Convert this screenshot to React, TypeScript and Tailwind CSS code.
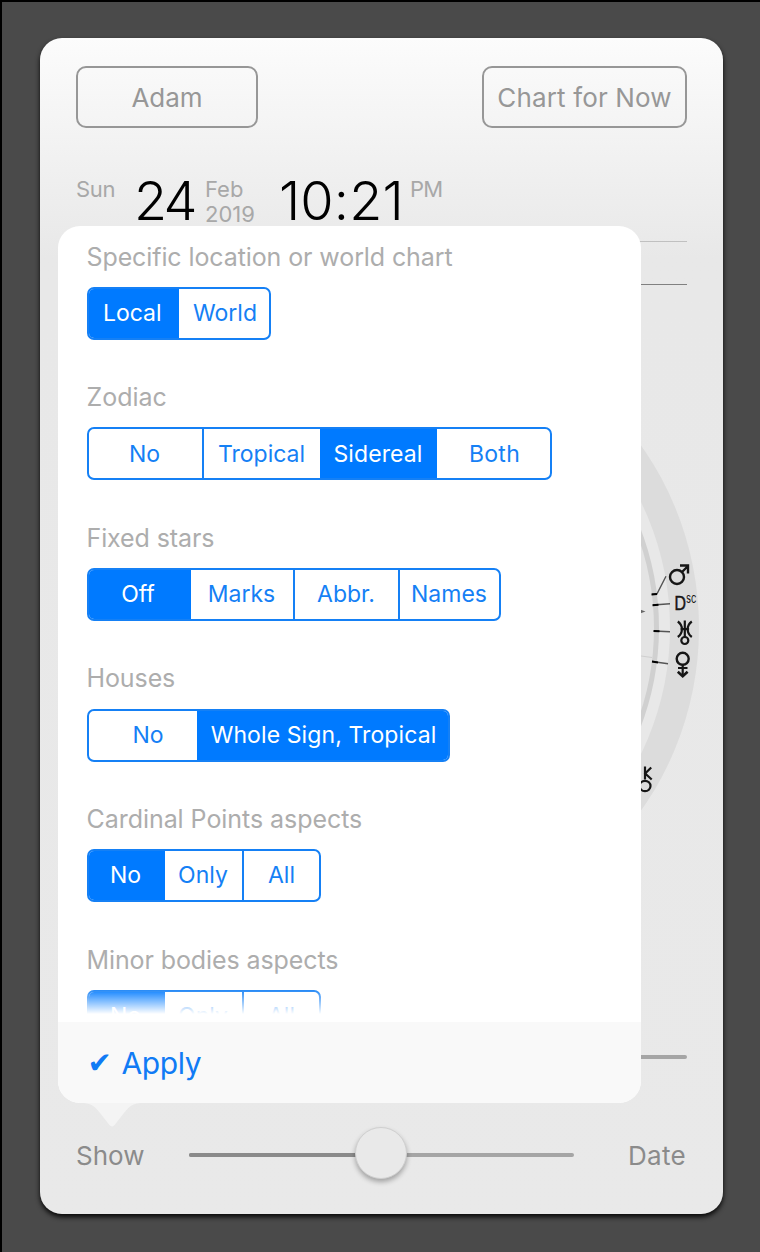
type Option = { text: string; width: string; tracking?: string };
type Group = { title: string; tracking: string; active: number; options: Option[] };

const groups: Group[] = [
  {
    title: "Specific location or world chart",
    tracking: "tracking-[-0.1px]",
    active: 0,
    options: [
      { text: "Local", width: "w-[90.5px] pr-[3px]" },
      { text: "World", width: "w-[90px] pl-[2px]" },
    ],
  },
  {
    title: "Zodiac",
    tracking: "tracking-[0px]",
    active: 2,
    options: [
      { text: "No", width: "w-[113px] pr-px" },
      { text: "Tropical", width: "w-[118px]" },
      { text: "Sidereal", width: "w-[117px]", tracking: "tracking-[0.1px]" },
      { text: "Both", width: "w-[113px] pl-[3px]", tracking: "tracking-[0.3px]" },
    ],
  },
  {
    title: "Fixed stars",
    tracking: "tracking-[-0.1px]",
    active: 0,
    options: [
      { text: "Off", width: "w-[102px] pr-[3px]" },
      { text: "Marks", width: "w-[102px]" },
      { text: "Abbr.", width: "w-[105px]" },
      { text: "Names", width: "w-[101px]" },
    ],
  },
  {
    title: "Houses",
    tracking: "tracking-[-0.1px]",
    active: 1,
    options: [
      { text: "No", width: "w-[108px] pl-[11px]" },
      { text: "Whole Sign, Tropical", width: "w-[251px] pl-[3px]", tracking: "tracking-[0.1px]" },
    ],
  },
  {
    title: "Cardinal Points aspects",
    tracking: "tracking-[-0.05px]",
    active: 0,
    options: [
      { text: "No", width: "w-[76px] pr-[2px]" },
      { text: "Only", width: "w-[77px]" },
      { text: "All", width: "w-[77px] pl-px" },
    ],
  },
  {
    title: "Minor bodies aspects",
    tracking: "tracking-[-0.1px]",
    active: 0,
    options: [
      { text: "No", width: "w-[76px] pr-[2px]" },
      { text: "Only", width: "w-[77px]" },
      { text: "All", width: "w-[77px] pl-px" },
    ],
  },
];

function Segmented({ group }: { group: Group }) {
  return (
    <div className="flex h-[53px] w-fit overflow-hidden rounded-[7px] border-2 border-[#1580f5] bg-white">
      {group.options.map((o, i) => {
        const on = i === group.active;
        const divider = i > 0 && !on && i - 1 !== group.active;
        return (
          <button
            key={o.text}
            className={`flex h-full shrink-0 items-center justify-center whitespace-nowrap text-[23px] ${o.width} ${o.tracking ?? ""} ${
              on ? "bg-[#007aff] text-white" : "text-[#1580f5]"
            } ${divider ? "border-l-2 border-[#1580f5]" : ""}`}
          >
            {o.text}
          </button>
        );
      })}
    </div>
  );
}

function ChartWheel() {
  return (
    <svg className="block" width="683" height="700" viewBox="40 285 683 700" fill="none">
      <circle cx="382" cy="628" r="317" fill="#dcdcdc" />
      <circle cx="382" cy="628" r="288" fill="#e8e8e8" />
      <circle cx="382" cy="628" r="274.5" fill="#e4e4e4" stroke="#d0d0d0" strokeWidth="5" />
      <path d="M641 656l11 1.500" stroke="#cfcfcf" />
      <path d="M640 609.500l5.500 2-5.500 2z" fill="#666" />
      <g stroke="#555" strokeWidth="1.400">
        <path d="M652 594.300l5-.5 9-17.500M653 605l17-1.200M654 631l16 .8M652 661.500l16 2.200" />
      </g>
      <g stroke="#000" strokeWidth="2">
        <path d="M651.500 594.500l5.500-.6M652.500 605.200l6-.5M653.500 631l6 .3M652 661.600l6 .8" />
      </g>
      <g stroke="#161616" strokeWidth="2.400">
        <circle cx="677" cy="577" r="7" />
        <path d="M682 572l6-6M680 565.500h8v8" />
        <path d="M677.800 621.500c5.500 4 5.500 11.500 0 15.500M691.800 621.500c-5.500 4-5.500 11.500 0 15.500M680.500 629.200h8.600M684.800 620.500v16.500" strokeWidth="2.200" />
        <circle cx="684.800" cy="640.500" r="3.500" strokeWidth="2.200" />
        <circle cx="682.700" cy="658.800" r="6" />
        <path d="M682.700 665v11M678 668h9.500" strokeWidth="2.200" />
        <path d="M677.800 671.700l4.900 4.500 4.900-4.500" strokeWidth="2.600" />
        <path d="M645 766.500v13M651.200 767.500l-6 6 6.500 6" strokeWidth="2.200" />
        <ellipse cx="645" cy="786" rx="5.500" ry="5.200" strokeWidth="2.200" />
      </g>
      <text x="674.200" y="609.500" fill="#161616" stroke="#161616" strokeWidth="0.400" fontSize="18.500" textLength="12" lengthAdjust="spacingAndGlyphs">D</text>
      <text x="686" y="603" fill="#161616" fontSize="13" textLength="10.500" lengthAdjust="spacingAndGlyphs">sc</text>
    </svg>
  );
}

function Popover() {
  return (
    <div className="absolute left-[17.5px] top-[188px] w-[583.5px]">
      <div className="flex h-[877px] flex-col overflow-hidden rounded-[22px] bg-white">
        <div className="relative h-[796px] overflow-hidden pl-[29px]">
          {groups.map((g) => (
            <section key={g.title} className="h-[140.6px]">
              <h2 className={`flex h-[60.8px] items-center whitespace-nowrap pt-[2px] text-[25px] text-[#adadad] ${g.tracking}`}>{g.title}</h2>
              <Segmented group={g} />
            </section>
          ))}
          <div className="absolute inset-x-0 bottom-0 h-[34px] bg-linear-to-b from-white/0 to-white to-[26px]" />
        </div>
        <footer className="flex h-[81px] items-center bg-[#f9f9f9] pl-[30px] text-[#107bf5]">
          <span className="w-[34px] pt-px font-['DejaVu_Sans'] text-[29px] leading-none">✔</span>
          <button className="text-[30px] leading-none tracking-[-0.4px]">Apply</button>
        </footer>
      </div>
      <svg className="ml-[26px] block" width="56" height="24" viewBox="0 0 56 24">
        <path d="M0 0h56c-9 1-12 5-16 10l-9 11.500q-3 4-6 0L16 10C12 5 9 1 0 0z" fill="#f4f4f4" />
      </svg>
    </div>
  );
}

export default function App() {
  return (
    <div className="h-[1252px] w-[760px] overflow-hidden border-l-2 border-t-2 border-black bg-[#4a4a4a] pl-[38px] pt-[36px] font-['Inter',sans-serif]">
      <main className="relative flex h-[1176px] w-[683px] flex-col overflow-visible rounded-[22px] bg-linear-to-b from-[#fcfcfc] via-[#e8e8e8] via-[220px] to-[#e9e9e9] shadow-[0_3px_5px_0px_rgba(0,0,0,0.9)]">
        <header className="flex h-[90px] shrink-0 items-end justify-between pl-[36px] pr-[36px] text-[26px] text-[#979797]">
          <button className="h-[62px] w-[182px] rounded-[10px] border-2 border-[#979797]">Adam</button>
          <button className="h-[62px] w-[205px] whitespace-nowrap rounded-[10px] border-2 border-[#979797] tracking-[0.15px]">Chart for Now</button>
        </header>
        <div className="flex h-[113px] shrink-0 items-start pl-[36px] pt-[49px] text-[22px] leading-[25px] text-[#a8a8a8]">
          <span className="w-[58px] tracking-[-0.3px]">Sun</span>
          <span className="w-[71px] whitespace-nowrap text-[54px] font-light leading-[48px] tracking-[-2.8px] text-black">24</span>
          <span className="w-[74px]">
            Feb
            <br />
            2019
          </span>
          <span className="w-[131px] whitespace-nowrap text-[54px] font-light leading-[48px] tracking-[0.1px] text-black">10:21</span>
          <span className="tracking-[-0.7px]">PM</span>
        </div>
        <div className="mx-[36px] h-[44px] shrink-0 border-y border-t-[#c0c0c0] border-b-[#808080]" />
        <ChartWheel />
        <div className="mx-[36px] mt-[70px] h-1 shrink-0 rounded-full bg-[#a5a5a5]" />
        <nav className="flex h-[155px] shrink-0 items-center pl-[36px] pr-[37px] pt-[37px] text-[26px] text-[#8b8b8b]">
          <span className="w-[113px]">Show</span>
          <div className="relative flex h-1 w-[385px] rounded-full bg-[#a5a5a5]">
            <div className="h-1 w-[192px] rounded-full bg-[#8a8a8a]" />
            <div className="absolute left-[166px] top-[-26px] size-[52px] rounded-full border border-[#d0d0d0] bg-[#e9e9e9] shadow-[0_3px_5px_rgba(0,0,0,0.3)]" />
          </div>
          <span className="ml-auto tracking-[0.3px]">Date</span>
        </nav>
        <Popover />
      </main>
    </div>
  );
}
